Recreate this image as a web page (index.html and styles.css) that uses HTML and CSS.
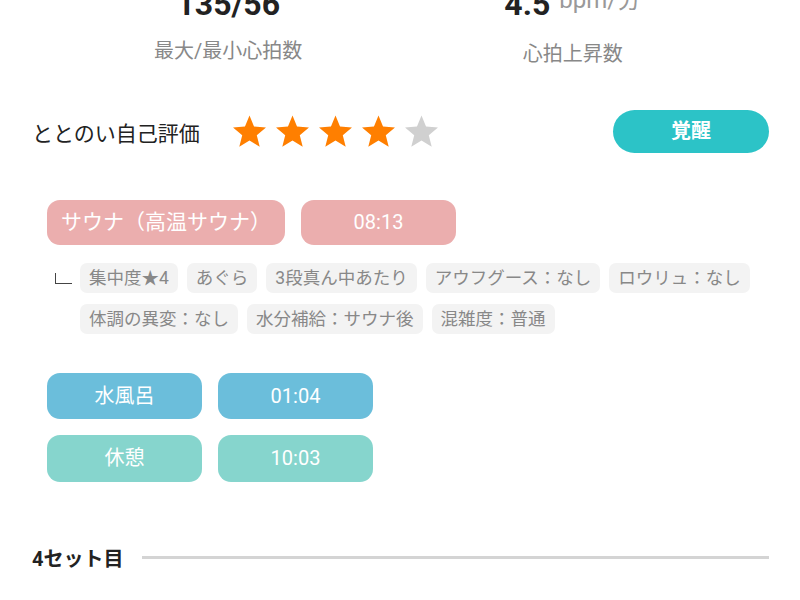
FILE: index.html
```html
<!DOCTYPE html>
<html lang="ja">
<head>
    <meta charset="UTF-8">
    <meta name="viewport" content="width=device-width, initial-scale=1.0">
    <title>サウナ記録</title>
    <link rel="stylesheet" href="styles.css">
</head>
<body>

<div class="stats">
    <div class="stat">
        <div class="stat-value">135/56</div>
        <div class="stat-label">最大/最小心拍数</div>
    </div>
    <div class="stat">
        <div class="stat-value">4.5<span class="stat-unit">bpm/分</span></div>
        <div class="stat-label">心拍上昇数</div>
    </div>
</div>

<div class="rating-row">
    <span class="rating-label">ととのい自己評価</span>
    <div class="stars">
        <svg class="star on" viewBox="0 0 24 24"><polygon points="12,1 15.1,8.6 23.3,9.2 17,14.5 19,22.5 12,18.1 5,22.5 7,14.5 0.7,9.2 8.9,8.6"/></svg>
        <svg class="star on" viewBox="0 0 24 24"><polygon points="12,1 15.1,8.6 23.3,9.2 17,14.5 19,22.5 12,18.1 5,22.5 7,14.5 0.7,9.2 8.9,8.6"/></svg>
        <svg class="star on" viewBox="0 0 24 24"><polygon points="12,1 15.1,8.6 23.3,9.2 17,14.5 19,22.5 12,18.1 5,22.5 7,14.5 0.7,9.2 8.9,8.6"/></svg>
        <svg class="star on" viewBox="0 0 24 24"><polygon points="12,1 15.1,8.6 23.3,9.2 17,14.5 19,22.5 12,18.1 5,22.5 7,14.5 0.7,9.2 8.9,8.6"/></svg>
        <svg class="star" viewBox="0 0 24 24"><polygon points="12,1 15.1,8.6 23.3,9.2 17,14.5 19,22.5 12,18.1 5,22.5 7,14.5 0.7,9.2 8.9,8.6"/></svg>
    </div>
    <span class="mood-btn">覚醒</span>
</div>

<div class="set">
    <div class="step-row">
        <span class="pill sauna wide">サウナ（高温サウナ）</span>
        <span class="pill sauna time">08:13</span>
    </div>

    <div class="memo">
        <span class="memo-mark"></span>
        <div class="tags">
            <span class="tag">集中度★4</span>
            <span class="tag">あぐら</span>
            <span class="tag">3段真ん中あたり</span>
            <span class="tag">アウフグース：なし</span>
            <span class="tag">ロウリュ：なし</span>
            <span class="tag">体調の異変：なし</span>
            <span class="tag">水分補給：サウナ後</span>
            <span class="tag">混雑度：普通</span>
        </div>
    </div>

    <div class="step-row water-row">
        <span class="pill water">水風呂</span>
        <span class="pill water time">01:04</span>
    </div>
    <div class="step-row rest-row">
        <span class="pill rest">休憩</span>
        <span class="pill rest time">10:03</span>
    </div>
</div>

<div class="set-title">
    <span>4セット目</span>
    <div class="set-line"></div>
</div>

</body>
</html>
```

FILE: styles.css
```css
body {
    font-family: 'Roboto', 'Noto Sans CJK JP', sans-serif;
    background-color: #fff;
    color: #222;
    margin: 0;
    padding: 0 31px 0 32px;
    overflow: hidden;
}

.stats {
    display: grid;
    grid-template-columns: 1fr 1fr;
    margin: -14px 24px 0;
}
.stat {
    text-align: center;
}
.stat-value {
    font-size: 32px;
    font-weight: bold;
    line-height: 36px;
    color: #222;
}
.stat-unit {
    font-size: 24px;
    font-weight: normal;
    color: #999;
    margin-left: 9px;
    position: relative;
    top: -7px;
}
.stat-label {
    font-size: 20px;
    color: #888;
    margin-top: 16px;
    line-height: 26px;
}

.rating-row {
    display: flex;
    align-items: center;
    margin-top: 43px;
}
.rating-label {
    font-size: 21px;
    color: #222;
}
.stars {
    display: flex;
    gap: 8px;
    margin-left: 32px;
    flex: 1;
}
.star {
    width: 35px;
    height: 35px;
    fill: #d0d0d0;
}
.star.on {
    fill: #ff7f00;
}
.mood-btn {
    width: 156px;
    height: 43px;
    line-height: 43px;
    border-radius: 22px;
    background-color: #2cc3c7;
    color: #fff;
    font-size: 20px;
    font-weight: bold;
    text-align: center;
}

.set {
    padding-left: 15px;
    margin-top: 47px;
}
.step-row {
    display: flex;
    gap: 16px;
}
.pill {
    min-width: 155px;
    height: 45px;
    line-height: 45px;
    border-radius: 13px;
    color: #fff;
    font-size: 20px;
    text-align: center;
    box-sizing: border-box;
}
.pill.wide {
    font-size: 21px;
    padding: 0 14px;
}
.sauna {
    background-color: #ebaeae;
}
.water {
    background-color: #6bbedb;
    height: 46px;
    line-height: 46px;
}
.rest {
    background-color: #86d5cd;
    height: 47px;
    line-height: 47px;
}
.water-row {
    margin-top: 39px;
}
.rest-row {
    margin-top: 16px;
}

.memo {
    display: flex;
    align-items: flex-start;
    margin-top: 18px;
}
.memo-mark {
    width: 16px;
    height: 10px;
    border-left: 1.5px solid #444;
    border-bottom: 1.5px solid #444;
    margin: 10px 0 0 8px;
    flex-shrink: 0;
}
.tags {
    display: flex;
    flex-wrap: wrap;
    gap: 11px 9px;
    margin-left: 8px;
}
.tag {
    background-color: #f3f3f3;
    color: #888;
    font-size: 17.5px;
    height: 30px;
    line-height: 30px;
    padding: 0 9px;
    border-radius: 7px;
}

.set-title {
    display: flex;
    align-items: center;
    gap: 19px;
    margin-top: 61px;
}
.set-title span {
    font-size: 20px;
    font-weight: bold;
    color: #222;
}
.set-line {
    flex: 1;
    height: 3px;
    background-color: #d4d4d4;
}
```
